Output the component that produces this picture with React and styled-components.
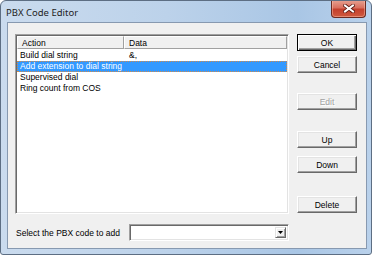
import styled, { createGlobalStyle, css } from "styled-components";

const GlobalStyle = createGlobalStyle`
  * {
    box-sizing: border-box;
  }

  html,
  body {
    margin: 0;
    background: #ffffff;
  }
`;

const Window = styled.div`
  width: 372px;
  height: 255px;
  display: flex;
  flex-direction: column;
  border: 1px solid #5d6e83;
  border-radius: 6px 6px 3px 3px;
  background: linear-gradient(to right, #cadbee 0%, #bcd2ea 45%, #a9c6e5 80%, #b9d1eb 100%);
  font-family: "Liberation Sans", Arial, sans-serif;
  font-size: 8.5px;
  color: #000000;
  overflow: hidden;
`;

const TitleBar = styled.div`
  height: 21px;
  flex: 0 0 21px;
  display: flex;
  align-items: center;
  padding-left: 5px;
`;

const Title = styled.span`
  font-family: "Noto Sans", "Open Sans", sans-serif;
  font-size: 9.5px;
  color: #1e1e1e;
  padding-top: 2px;
`;

const CloseButton = styled.div`
  margin-left: auto;
  margin-right: 5px;
  margin-top: -1px;
  align-self: flex-start;
  width: 35px;
  height: 18px;
  display: flex;
  align-items: center;
  justify-content: center;
  border: 1px solid #6b2a21;
  border-top: none;
  border-radius: 0 0 4px 4px;
  background: linear-gradient(to bottom, #e7a393 0%, #d9705f 45%, #c4402d 55%, #cf5a3f 100%);
  box-shadow: inset 0 0 0 1px rgba(255, 200, 180, 0.45);
`;

const Client = styled.div`
  flex: 1;
  margin: 0 4px 5px 6px;
  border: 1px solid #8799b0;
  background: #f0f0f0;
  padding: 11px 9px 7px 7px;
  display: flex;
  flex-direction: column;
  gap: 10px;
`;

const TopRow = styled.div`
  height: 180px;
  display: flex;
  gap: 8px;
`;

const sunken = css`
  border-style: solid;
  border-width: 1px;
  border-color: #a0a0a0 #ffffff #ffffff #a0a0a0;
  box-shadow: inset 1px 1px 0 #696969, inset -1px -1px 0 #e3e3e3;
`;

const ListView = styled.div`
  ${sunken};
  width: 274px;
  background: #ffffff;
  padding: 1px;
  display: flex;
  flex-direction: column;
`;

const HeaderRow = styled.div`
  height: 13px;
  display: grid;
  grid-template-columns: 107px 1fr;
  margin-bottom: 1px;
`;

const HeaderCell = styled.div`
  display: flex;
  align-items: center;
  padding-left: 4px;
  background: #f0f0f0;
  border-style: solid;
  border-width: 1px;
  border-color: #ffffff #a0a0a0 #a0a0a0 #ffffff;
`;

const Row = styled.div`
  height: 11px;
  display: grid;
  grid-template-columns: 107px 1fr;
  align-items: center;
  border: 1px solid transparent;
  ${(p) =>
    p.$selected &&
    css`
      background: #3399ff;
      color: #ffffff;
      border: 1px dotted #d08a4a;
    `}
`;

const Cell = styled.span`
  padding-left: ${(p) => p.$pad}px;
  white-space: nowrap;
  line-height: 9px;
`;

const ButtonColumn = styled.div`
  width: 60px;
  display: flex;
  flex-direction: column;
`;

const Button = styled.div`
  height: 17px;
  margin-top: ${(p) => p.$gap || 0}px;
  display: flex;
  align-items: center;
  justify-content: center;
  background: #f0f0f0;
  border-style: solid;
  border-width: 1px;
  border-color: #ffffff #696969 #696969 #ffffff;
  box-shadow: inset -1px -1px 0 #a0a0a0, inset 1px 1px 0 #e3e3e3;
  color: ${(p) => (p.$disabled ? "#a0a0a0" : "#000000")};
  text-shadow: ${(p) => (p.$disabled ? "1px 1px 0 #ffffff" : "none")};
  ${(p) =>
    p.$default &&
    css`
      border-color: #000000;
      box-shadow: inset 1px 1px 0 #ffffff, inset -1px -1px 0 #696969, inset -2px -2px 0 #a0a0a0;
    `}
`;

const BottomRow = styled.div`
  width: 274px;
  height: 17px;
  display: grid;
  grid-template-columns: 114px 160px;
  align-items: center;
`;

const Label = styled.span`
  padding-left: 1px;
  white-space: nowrap;
`;

const Combo = styled.div`
  ${sunken};
  height: 17px;
  background: #ffffff;
  display: flex;
  justify-content: flex-end;
  padding: 2px;
`;

const ComboArrow = styled.div`
  width: 11px;
  display: flex;
  align-items: center;
  justify-content: center;
  background: #f0f0f0;
  border-style: solid;
  border-width: 1px;
  border-color: #e3e3e3 #696969 #696969 #e3e3e3;
  box-shadow: inset 1px 1px 0 #ffffff, inset -1px -1px 0 #a0a0a0;
`;

const rows = [
  { action: "Build dial string", data: "&," },
  { action: "Add extension to dial string", data: "", selected: true },
  { action: "Supervised dial", data: "" },
  { action: "Ring count from COS", data: "" },
];

function CloseGlyph() {
  return (
    <svg width="12" height="9" viewBox="0 0 12 9">
      <path d="M2 1.5 L10 7.5 M10 1.5 L2 7.5" stroke="#5a1a12" strokeWidth="3.6" strokeLinecap="square" />
      <path d="M2 1.5 L10 7.5 M10 1.5 L2 7.5" stroke="#ffffff" strokeWidth="2" strokeLinecap="square" />
    </svg>
  );
}

function App() {
  return (
    <>
      <GlobalStyle />
      <Window>
        <TitleBar>
          <Title>PBX Code Editor</Title>
          <CloseButton>
            <CloseGlyph />
          </CloseButton>
        </TitleBar>

        <Client>
          <TopRow>
            <ListView>
              <HeaderRow>
                <HeaderCell>Action</HeaderCell>
                <HeaderCell>Data</HeaderCell>
              </HeaderRow>
              {rows.map((r) => (
                <Row key={r.action} $selected={r.selected}>
                  <Cell $pad={2}>{r.action}</Cell>
                  <Cell $pad={4}>{r.data}</Cell>
                </Row>
              ))}
            </ListView>

            <ButtonColumn>
              <Button $default>OK</Button>
              <Button $gap={5}>Cancel</Button>
              <Button $gap={20} $disabled>
                Edit
              </Button>
              <Button $gap={21}>Up</Button>
              <Button $gap={8}>Down</Button>
              <Button $gap={23}>Delete</Button>
            </ButtonColumn>
          </TopRow>

          <BottomRow>
            <Label>Select the PBX code to add</Label>
            <Combo>
              <ComboArrow>
                <svg width="5" height="3" viewBox="0 0 5 3">
                  <path d="M0 0 H5 L2.5 3 Z" fill="#000000" />
                </svg>
              </ComboArrow>
            </Combo>
          </BottomRow>
        </Client>
      </Window>
    </>
  );
}

export default App;
